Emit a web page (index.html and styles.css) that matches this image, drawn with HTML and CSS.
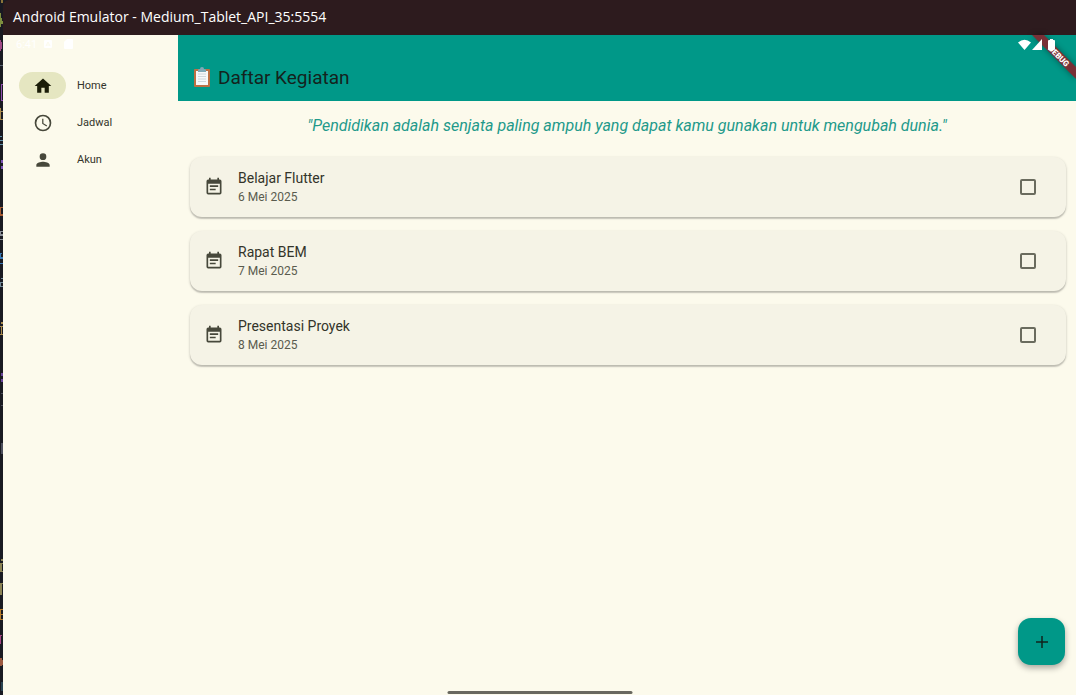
FILE: index.html
```html
<!DOCTYPE html>
<html lang="id">
<head>
<meta charset="utf-8">
<meta name="viewport" content="width=device-width, initial-scale=1">
<title>Daftar Kegiatan</title>
<link rel="stylesheet" href="styles.css">
</head>
<body>
<svg class="backdrop" viewBox="0 0 3 695" preserveAspectRatio="none" aria-hidden="true">
  <path fill="#8a7439" d="M1 0h2v3h-2z"/>
  <path fill="#7e8f3f" d="M0 13h1v14h-1zM1 18h1v3h-1zM1 21h2v3h-2z"/>
  <path fill="#a14a86" d="M0 40h1v2h1v7h-1v2h-1z"/>
  <path fill="#56606e" d="M0 65h3v1h-3z"/>
  <path fill="#8f4fae" d="M1 84h2v1h-1v15h1v1h-2z"/>
  <path fill="#a88a4d" d="M0 108h1v3h2v1h-2v7h2v1h-3z"/>
  <path fill="#5f8fa8" d="M0 136h2v1h-2zM0 140h3v1h-3zM0 144h3v1h-3z"/>
  <path fill="#7c52b5" d="M1 160h2v3h-2zM1 166h2v3h-2z"/>
  <path fill="#a65b32" d="M0 207h3v1h-2v6h2v2h-3z"/>
  <path fill="#8a8f98" d="M0 231h3v1h-2v2h2v2h-3zM0 239h3v1h-3z"/>
  <path fill="#3978b5" d="M0 253h2v1h-1v3h2v2h-3zM0 263h3v1h-3z"/>
  <path fill="#718998" d="M1 278h2v1h-2zM0 282h3v1h-2v3h2v1h-3z"/>
  <path fill="#a98a4b" d="M1 322h2v2h-2zM0 326h3v1h-1v7h1v1h-3v-1h1v-7h-1z"/>
  <path fill="#69459b" d="M1 373h2v3h-2zM1 379h2v3h-2z"/>
  <path fill="#4c4e5c" d="M1 393h2v1h-2zM1 405h2v1h-2zM1 443h2v11h-2z"/>
  <path fill="#8b8355" d="M1 559h2v2h-2zM0 563h3v1h-1v7h1v1h-3zM0 583h3v1h-1v11h-2z"/>
  <path fill="#b57b2c" d="M0 609h3v1h-2v4h2v1h-2v4h2v1h-3z"/>
  <path fill="#a44583" d="M0 635h2v1h-1v8h-1z"/>
  <path fill="#9b5940" d="M0 658h2v2h1v5h-1v1h-2z"/>
  <path fill="#294351" d="M1 682h2v9h-2z"/>
</svg>
<div class="window">
  <header class="titlebar">Android Emulator - Medium_Tablet_API_35:5554</header>
  <div class="screen">
    <aside class="rail">
      <div class="status">
        <span>6:41</span>
        <svg width="8" height="8" viewBox="0 0 8 8" aria-hidden="true"><rect width="8" height="8" rx="1" fill="#fff"/><path d="M2 6l2-4 2 4M3 5h2" fill="none" stroke="#fcfaec"/></svg>
        <svg class="sd" width="9" height="10" viewBox="0 0 9 10" aria-hidden="true"><path d="M3 0h5a1 1 0 0 1 1 1v8a1 1 0 0 1-1 1H1a1 1 0 0 1-1-1V3z" fill="#fff"/></svg>
      </div>
      <nav class="nav">
        <a class="nav-item" href="#home" aria-current="page"><span class="pill active"><svg class="icon" viewBox="0 0 24 24" aria-hidden="true"><path d="M10 20v-6h4v6h5v-8h3L12 3 2 12h3v8z"/></svg></span>Home</a>
        <a class="nav-item" href="#jadwal"><span class="pill"><svg class="icon" viewBox="0 0 24 24" aria-hidden="true"><path d="M12 2a10 10 0 1 0 0 20 10 10 0 0 0 0-20zm0 18a8 8 0 1 1 0-16 8 8 0 0 1 0 16zm.5-13H11v6l5.200 3.200.8-1.300-4.500-2.700z"/></svg></span>Jadwal</a>
        <a class="nav-item" href="#akun"><span class="pill"><svg class="icon" viewBox="0 0 24 24" aria-hidden="true"><path d="M12 12a4 4 0 1 0 0-8 4 4 0 0 0 0 8zm0 2c-2.700 0-8 1.300-8 4v2h16v-2c0-2.700-5.300-4-8-4z"/></svg></span>Akun</a>
      </nav>
    </aside>
    <main class="content">
      <div class="appbar">
        <svg class="clipboard" viewBox="0 0 18 21" aria-hidden="true"><rect x="1" y="2" width="16" height="18" rx="1" fill="#bd7044"/><path d="M3 4h12v14H3z" fill="#f7f8fa"/><path d="M5 7h8M5 9.500h8M5 12h8M5 14.500h8" stroke="#c4ced5" stroke-width=".8"/><path d="M5 5V3q0-1 2-1a2 2 0 0 1 4 0q2 0 2 1v2z" fill="#7fa9b8"/></svg>
        <h1>Daftar Kegiatan</h1>
        <svg class="debug" width="50" height="50" viewBox="0 0 50 50" aria-hidden="true"><path class="ribbon" d="M6 0h12L50 32v12z"/></svg>
        <svg class="signals" width="40" height="12" viewBox="0 0 40 12" aria-hidden="true"><g fill="#fff"><path d="M0 3.500Q6.500-2 13 3.500L6.500 11z"/><path d="M24 0v11H14z"/><path d="M31 1h1V0h3v1h1q1 0 1 1v8q0 1-1 1h-5q-1 0-1-1V2q0-1 1-1z"/></g></svg>
        <svg class="debug-label" width="50" height="50" viewBox="0 0 50 50"><text transform="translate(33 21) rotate(45)" dy="3" text-anchor="middle">DEBUG</text></svg>
      </div>
      <p class="quote">"Pendidikan adalah senjata paling ampuh yang dapat kamu gunakan untuk mengubah dunia."</p>
      <ul class="tasks">
        <li><label class="card"><svg class="icon" viewBox="0 0 24 24" aria-hidden="true"><path d="M17 10H7v2h10zm2-7h-1V1h-2v2H8V1H6v2H5a2 2 0 0 0-2 2v14a2 2 0 0 0 2 2h14a2 2 0 0 0 2-2V5a2 2 0 0 0-2-2zm0 16H5V8h14zm-5-5H7v2h7z"/></svg><span class="text"><span class="name">Belajar Flutter</span><span class="date">6 Mei 2025</span></span><input type="checkbox"></label></li>
        <li><label class="card"><svg class="icon" viewBox="0 0 24 24" aria-hidden="true"><path d="M17 10H7v2h10zm2-7h-1V1h-2v2H8V1H6v2H5a2 2 0 0 0-2 2v14a2 2 0 0 0 2 2h14a2 2 0 0 0 2-2V5a2 2 0 0 0-2-2zm0 16H5V8h14zm-5-5H7v2h7z"/></svg><span class="text"><span class="name">Rapat BEM</span><span class="date">7 Mei 2025</span></span><input type="checkbox"></label></li>
        <li><label class="card"><svg class="icon" viewBox="0 0 24 24" aria-hidden="true"><path d="M17 10H7v2h10zm2-7h-1V1h-2v2H8V1H6v2H5a2 2 0 0 0-2 2v14a2 2 0 0 0 2 2h14a2 2 0 0 0 2-2V5a2 2 0 0 0-2-2zm0 16H5V8h14zm-5-5H7v2h7z"/></svg><span class="text"><span class="name">Presentasi Proyek</span><span class="date">8 Mei 2025</span></span><input type="checkbox"></label></li>
      </ul>
    </main>
    <button class="fab" type="button" aria-label="Tambah kegiatan"><svg width="12" height="12" viewBox="0 0 12 12" aria-hidden="true"><path d="M6 0v12M0 6h12" stroke="#10231c" stroke-width="1.500"/></svg></button>
    <div class="home-bar"></div>
  </div>
</div>
</body>
</html>
```
FILE: styles.css
```css
* { box-sizing: border-box; }

body {
  margin: 0;
  display: flex;
  height: 100vh;
  overflow: hidden;
  background: #191a22;
  color: #33342a;
  font-family: Roboto, "Liberation Sans", sans-serif;
}

.backdrop { flex: none; width: 3px; height: 100%; }

.window { flex: 1; min-width: 0; display: flex; flex-direction: column; }

.titlebar {
  height: 35px;
  padding-left: 10px;
  background: #2d1b1e;
  border-top-left-radius: 6px;
  color: #fff;
  font: 14px/33px "Open Sans", "Noto Sans", sans-serif;
}

.screen {
  position: relative;
  flex: 1;
  min-height: 0;
  display: flex;
  background: #fcfaec;
}

.rail { flex: none; width: 175px; }

.status {
  display: flex;
  align-items: center;
  gap: 7px;
  height: 18px;
  padding-left: 13px;
  color: #fff;
  font-size: 11px;
}

.status .sd { margin-left: 5px; }

.nav {
  display: flex;
  flex-direction: column;
  gap: 10px;
  padding: 19px 16px;
}

.nav-item {
  display: flex;
  align-items: center;
  gap: 11px;
  color: #33342a;
  font-size: 11px;
  font-weight: 400;
  text-decoration: none;
}

.pill {
  display: flex;
  align-items: center;
  justify-content: center;
  width: 47px;
  height: 27px;
  border-radius: 14px;
}

.pill.active { background: #e5e6c1; }

.icon { flex: none; width: 20px; height: 20px; fill: #47483b; }

.active .icon { fill: #1b1d08; }

.content { flex: 1; min-width: 0; }

.appbar {
  position: relative;
  display: flex;
  align-items: center;
  gap: 7px;
  height: 66px;
  padding: 18px 15px 0;
  background: #009888;
}

.clipboard { width: 18px; height: 21px; }

h1 {
  margin: 0;
  color: #14231d;
  font-size: 19px;
  font-weight: 400;
}

.signals { position: absolute; top: 4px; right: 18px; }

.debug, .debug-label { position: absolute; top: 0; right: 0; }

.debug { filter: drop-shadow(0 0 3px #0006); }

.ribbon { fill: #783036; }

.debug-label text { fill: #fff; font-size: 8px; font-weight: 900; }

.quote {
  margin: 0;
  padding: 15px 12px 13px;
  color: #22998a;
  font-size: 16px;
  font-style: italic;
  line-height: 20px;
  text-align: center;
}

.tasks {
  display: flex;
  flex-direction: column;
  gap: 14px;
  margin: 0;
  padding: 8px 10px 0 12px;
  list-style: none;
}

.card {
  display: flex;
  align-items: center;
  gap: 14px;
  height: 60px;
  padding: 0 30px 0 14px;
  border-radius: 12px;
  background: #f5f3e6;
  box-shadow: 0 1px 3px #0003, 0 2px 1px #0002;
}

.text { flex: 1; display: flex; flex-direction: column; }

.name { font-size: 14px; line-height: 20px; }

.date { color: #5a5b4e; font-size: 12px; line-height: 18px; }

.card input {
  appearance: none;
  width: 16px;
  height: 16px;
  margin: 0;
  border: 2px solid #6a6b5e;
  border-radius: 2px;
}

.card input:checked { background: #009888; }

.fab {
  position: absolute;
  right: 11px;
  bottom: 30px;
  display: grid;
  place-items: center;
  width: 47px;
  height: 47px;
  padding: 0;
  border: 0;
  border-radius: 13px;
  background: #009888;
  box-shadow: 0 3px 6px #0005;
}

.home-bar {
  position: absolute;
  bottom: 1px;
  left: 50%;
  width: 185px;
  height: 3px;
  border-radius: 2px;
  background: #69685f;
  transform: translateX(-50%);
}
```
